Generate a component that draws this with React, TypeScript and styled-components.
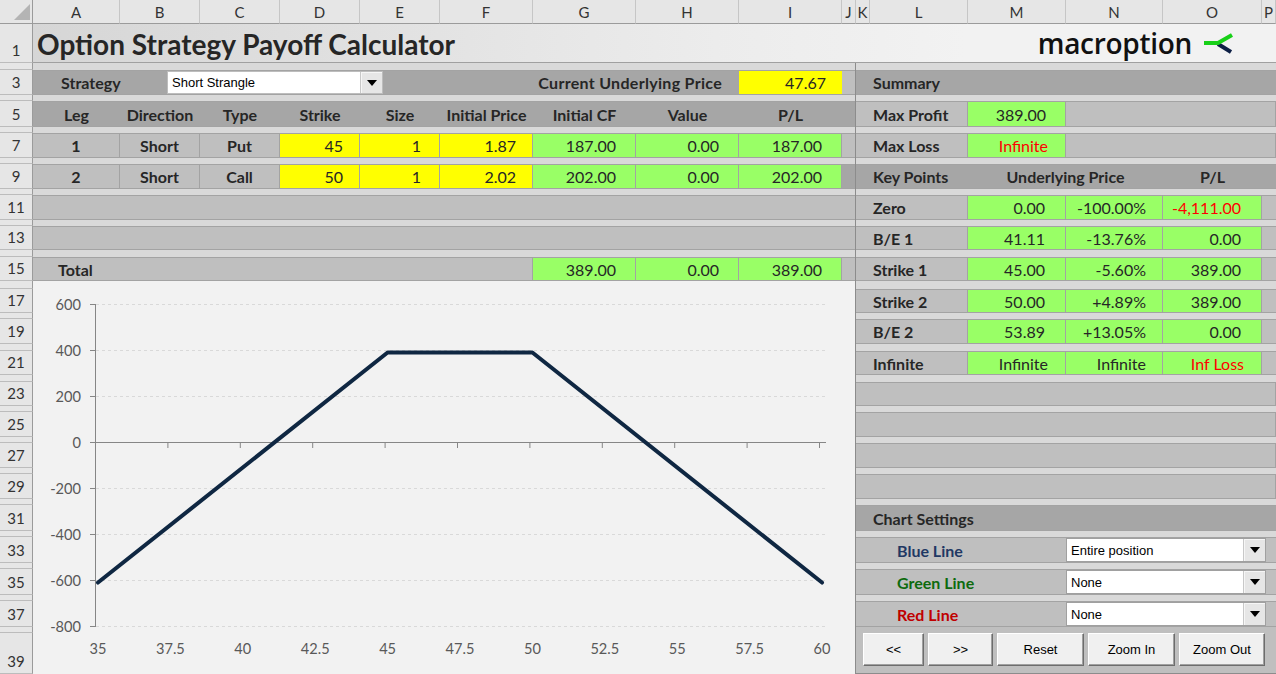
import React from 'react';
import styled, { createGlobalStyle, css } from 'styled-components';

const GlobalStyle = createGlobalStyle`
  html, body {
    margin: 0;
    padding: 0;
    background: #ffffff;
    overflow: hidden;
  }
  body {
    font-family: Lato, "Liberation Sans", sans-serif;
    color: #262626;
  }
  * {
    box-sizing: border-box;
  }
`;

const COLS = [33, 87, 80, 80, 80, 80, 93, 103, 103, 103, 14, 14, 98, 98, 97, 99, 14];
const LETTERS = 'ABCDEFGHIJKLMNOP'.split('');
const ROWS = [39, 7, 25, 6, 26, 6, 25, 6, 25, 6, 25, 6, 24, 7, 24, 8, 24, 6, 25, 7, 24, 7, 24, 6, 25, 6, 25, 6, 25, 6, 26, 6, 26, 6, 26, 6, 26, 6, 41];
const LINE = '#a3a3a3';

const colLine = (letter: string) => letter.charCodeAt(0) - 63;

// "A:C 7" -> grid placement over columns A..C of sheet row 7
const place = (at: string) => {
  const [cols, rows] = at.split(' ');
  const [c1, c2 = c1] = cols.split(':');
  const [r1, r2 = r1] = rows.split(':').map(Number);
  return css`
    grid-column: ${colLine(c1)} / ${colLine(c2) + 1};
    grid-row: ${r1 + 1} / ${r2 + 2};
  `;
};

type Tone = 'head' | 'gray' | 'yellow' | 'green';
const fills: Record<Tone, string> = {
  head: '#a6a6a6',
  gray: '#bfbfbf',
  yellow: '#ffff00',
  green: '#99ff66',
};
const justify = { left: 'flex-start', center: 'center', right: 'flex-end' };

const Sheet = styled.div`
  display: grid;
  grid-template-columns: ${COLS.map(w => `${w}px`).join(' ')};
  grid-template-rows: 24px ${ROWS.map(h => `${h}px`).join(' ')};
  width: 1276px;
  height: 674px;
  overflow: hidden;
  background: #d9d9d9;
`;

const Corner = styled.div`
  grid-column: 1;
  grid-row: 1;
  background: #e6e6e6;
  border-right: 1px solid #9b9b9b;
  border-bottom: 1px solid #9b9b9b;
  display: flex;
  align-items: flex-end;
  justify-content: flex-end;
  padding: 0 2px 3px 0;
`;

const ColHead = styled.div<{ $col: number }>`
  grid-column: ${p => p.$col};
  grid-row: 1;
  background: #e6e6e6;
  border-right: 1px solid #c6c6c6;
  border-bottom: 1px solid #9b9b9b;
  display: flex;
  align-items: center;
  justify-content: center;
  font-size: 15px;
  color: #333333;
  overflow: hidden;
`;

const RowHead = styled.div<{ $row: number }>`
  grid-column: 1;
  grid-row: ${p => p.$row + 1};
  background: #e6e6e6;
  border-right: 1px solid #9b9b9b;
  border-bottom: 1px solid #bcbcbc;
  display: flex;
  align-items: flex-end;
  justify-content: center;
  padding-bottom: 4px;
  font-size: 15px;
  line-height: 15px;
  color: #333333;
  overflow: hidden;
`;

const TitleBar = styled.header`
  ${place('A:P 1')}
  display: flex;
  align-items: center;
  justify-content: space-between;
  padding: 0 42px 0 4px;
  background: linear-gradient(to right, #d6d6d6 0%, #ececec 55%, #f2f2f2 75%);
  border-bottom: 1px solid #a0a0a0;
`;

const Heading = styled.h1`
  margin: 0;
  font-size: 28px;
  font-weight: 700;
  color: #262626;
  padding-top: 2px;
`;

const Logo = styled.div`
  display: flex;
  align-items: center;
  gap: 10px;
`;

const LogoText = styled.span`
  font-family: "Open Sans", "Noto Sans", sans-serif;
  font-weight: 600;
  font-size: 28px;
  letter-spacing: -0.3px;
  color: #111111;
`;

const Cell = styled.div<{
  $at: string;
  $tone: Tone;
  $align?: 'left' | 'center' | 'right';
  $inset?: number;
  $bold?: boolean;
  $alert?: boolean;
}>`
  ${p => place(p.$at)}
  display: flex;
  align-items: center;
  justify-content: ${p => justify[p.$align ?? 'left']};
  padding-left: ${p => ((p.$align ?? 'left') === 'left' ? p.$inset ?? 17 : 0)}px;
  padding-right: ${p => (p.$align === 'right' ? p.$inset ?? 19 : 0)}px;
  background: ${p => fills[p.$tone]};
  border-top: 1px solid ${LINE};
  border-bottom: 1px solid ${LINE};
  border-right: ${p => (p.$tone === 'head' ? 'none' : `1px solid ${LINE}`)};
  font-size: 16px;
  font-weight: ${p => (p.$bold ? 700 : 400)};
  color: ${p => (p.$alert ? '#ff0000' : '#262626')};
  white-space: nowrap;
  overflow: hidden;
`;

const ControlRow = styled.div`
  ${place('A:I 3')}
  display: flex;
  background: #a6a6a6;
  border-top: 1px solid ${LINE};
  border-bottom: 1px solid ${LINE};
  font-size: 16px;
  font-weight: 700;
`;

const ControlLabel = styled.span`
  width: 134px;
  display: flex;
  align-items: center;
  padding-left: 28px;
`;

const PriceLabel = styled.span`
  flex: 1;
  display: flex;
  align-items: center;
  justify-content: flex-end;
  padding-right: 17px;
  letter-spacing: 0.3px;
`;

const PriceValue = styled.span`
  width: 103px;
  display: flex;
  align-items: center;
  justify-content: flex-end;
  padding-right: 16px;
  background: #ffff00;
  font-weight: 400;
`;

const Combo = styled.div<{ $w: number; $framed?: boolean }>`
  width: ${p => p.$w}px;
  display: flex;
  background: #ffffff;
  border: 1px solid ${p => (p.$framed ? '#a0a0a0' : '#bdbdbd')};
  font-family: "Liberation Sans", Arial, sans-serif;
  font-size: 13px;
  font-weight: 400;
  color: #000000;
`;

const ComboValue = styled.span`
  flex: 1;
  display: flex;
  align-items: center;
  padding-left: 4px;
`;

const ComboButton = styled.span`
  width: 22px;
  display: flex;
  align-items: center;
  justify-content: center;
  background: #e6e6e6;
  border-left: 1px solid #c8c8c8;
  box-shadow: inset 1px 1px 0 #f6f6f6;
`;

const Caret = styled.span`
  width: 0;
  height: 0;
  border-left: 5px solid transparent;
  border-right: 5px solid transparent;
  border-top: 6px solid #000000;
`;

const Gutter = styled.div`
  ${place('J 2:39')}
  border-right: 1px solid #8c8c8c;
  pointer-events: none;
`;

const ChartArea = styled.div`
  ${place('A:J 16:39')}
  background: #f2f2f2;
  border-right: 1px solid #8c8c8c;
  overflow: hidden;
`;

const SettingRow = styled.div<{ $row: number }>`
  ${p => place(`K:P ${p.$row}`)}
  display: flex;
  background: #bfbfbf;
  border-top: 1px solid ${LINE};
  border-bottom: 1px solid ${LINE};
  padding-right: 10px;
`;

const SettingLabel = styled.span<{ $color: string }>`
  flex: 1;
  display: flex;
  align-items: center;
  padding-left: 41px;
  font-size: 16px;
  font-weight: 700;
  color: ${p => p.$color};
`;

const ButtonBar = styled.div`
  ${place('K:P 38:39')}
  display: flex;
  align-items: flex-start;
  gap: 4px;
  padding: 6px 0 0 7px;
  background: #bfbfbf;
  border-bottom: 1px solid #8c8c8c;
`;

const ActionButton = styled.button<{ $w: number }>`
  width: ${p => p.$w}px;
  height: 33px;
  padding: 0;
  background: #f0f0f0;
  border: 1px solid;
  border-color: #ffffff #6d6d6d #6d6d6d #ffffff;
  box-shadow: inset -1px -1px 0 #a0a0a0;
  font-family: "Liberation Sans", Arial, sans-serif;
  font-size: 13px;
  color: #000000;
`;

const legs = [
  { leg: '1', dir: 'Short', type: 'Put', strike: '45', size: '1', price: '1.87', cf: '187.00', value: '0.00', pl: '187.00' },
  { leg: '2', dir: 'Short', type: 'Call', strike: '50', size: '1', price: '2.02', cf: '202.00', value: '0.00', pl: '202.00' },
];

const keyPoints = [
  { label: 'Zero', price: '0.00', pct: '-100.00%', pl: '-4,111.00', bad: true },
  { label: 'B/E 1', price: '41.11', pct: '-13.76%', pl: '0.00' },
  { label: 'Strike 1', price: '45.00', pct: '-5.60%', pl: '389.00' },
  { label: 'Strike 2', price: '50.00', pct: '+4.89%', pl: '389.00' },
  { label: 'B/E 2', price: '53.89', pct: '+13.05%', pl: '0.00' },
  { label: 'Infinite', price: 'Infinite', pct: 'Infinite', pl: 'Inf Loss', bad: true, text: true },
];

const settings = [
  { label: 'Blue Line', color: '#1f3864', value: 'Entire position' },
  { label: 'Green Line', color: '#0e6b0e', value: 'None' },
  { label: 'Red Line', color: '#c00000', value: 'None' },
];

const buttons = [
  { label: '<<', w: 61 },
  { label: '>>', w: 65 },
  { label: 'Reset', w: 87 },
  { label: 'Zoom In', w: 87 },
  { label: 'Zoom Out', w: 86 },
];

// chart scale, in page pixels
const px = (s: number) => 98 + (s - 35) * 28.96;
const py = (v: number) => 442 - v * 0.23;
const payoff = (s: number) => 389 - 100 * Math.max(45 - s, 0) - 100 * Math.max(s - 50, 0);

const PayoffChart: React.FC = () => {
  const yTicks = [600, 400, 200, 0, -200, -400, -600, -800];
  const xTicks = Array.from({ length: 11 }, (_, k) => 35 + k * 2.5);
  const points = [35, 45, 50, 60].map(s => `${px(s)},${py(payoff(s))}`).join(' ');

  return (
    <ChartArea>
      <svg width={822} height={393} viewBox="33 281 822 393" fontFamily="Lato, sans-serif" fontSize={14.6}>
        {yTicks.filter(v => v !== 0).map(v => (
          <line key={v} x1={96} x2={826} y1={py(v) + 0.5} y2={py(v) + 0.5} stroke="#d9d9d9" strokeDasharray="3 3" />
        ))}
        <line x1={95.5} x2={95.5} y1={py(600)} y2={py(-800) + 1} stroke="#868686" />
        <line x1={95} x2={826} y1={442.5} y2={442.5} stroke="#868686" />
        {yTicks.map(v => (
          <g key={v}>
            <line x1={90} x2={95.5} y1={py(v) + 0.5} y2={py(v) + 0.5} stroke="#868686" />
            <text x={81} y={py(v) + 0.5} textAnchor="end" dominantBaseline="central" fill="#595959">
              {v}
            </text>
          </g>
        ))}
        {xTicks.map((s, k) => (
          <g key={s}>
            <line x1={95.5 + 72.4 * k} x2={95.5 + 72.4 * k} y1={442.5} y2={448} stroke="#868686" />
            <text x={px(s)} y={648} textAnchor="middle" dominantBaseline="central" fill="#595959">
              {s}
            </text>
          </g>
        ))}
        <polyline points={points} fill="none" stroke="#0f2742" strokeWidth={4} strokeLinejoin="round" strokeLinecap="round" />
      </svg>
    </ChartArea>
  );
};

const App: React.FC = () => {
  return (
    <>
      <GlobalStyle />
      <Sheet>
        <Corner>
          <svg width={16} height={16} viewBox="0 0 16 16">
            <polygon points="0,16 16,16 16,0" fill="#b4b4b4" />
          </svg>
        </Corner>
        {LETTERS.map((l, i) => (
          <ColHead key={l} $col={i + 2}>{l}</ColHead>
        ))}
        {ROWS.map((h, i) => (
          <RowHead key={i} $row={i + 1}>{h > 10 ? i + 1 : ''}</RowHead>
        ))}

        <TitleBar>
          <Heading>Option Strategy Payoff Calculator</Heading>
          <Logo>
            <LogoText>macroption</LogoText>
            <svg width={32} height={24} viewBox="0 0 32 24">
              <path d="M16 13 L29 21" stroke="#0d1f45" strokeWidth={4} fill="none" />
              <path d="M2 12 L16 12 L30 4" stroke="#18d018" strokeWidth={4} fill="none" strokeLinejoin="round" />
            </svg>
          </Logo>
        </TitleBar>

        {/* left panel */}
        <ControlRow>
          <ControlLabel>Strategy</ControlLabel>
          <Combo $w={216}>
            <ComboValue>Short Strangle</ComboValue>
            <ComboButton><Caret /></ComboButton>
          </Combo>
          <PriceLabel>Current Underlying Price</PriceLabel>
          <PriceValue>47.67</PriceValue>
        </ControlRow>
        <Cell $at="J 3" $tone="gray" />

        {['Leg', 'Direction', 'Type', 'Strike', 'Size', 'Initial Price', 'Initial CF', 'Value', 'P/L'].map((t, i) => (
          <Cell key={t} $at={`${LETTERS[i]} 5`} $tone="head" $align="center" $bold>{t}</Cell>
        ))}
        <Cell $at="J 5" $tone="head" />

        {legs.map((l, i) => {
          const r = 7 + i * 2;
          return (
            <React.Fragment key={l.leg}>
              <Cell $at={`A ${r}`} $tone="gray" $align="center" $bold>{l.leg}</Cell>
              <Cell $at={`B ${r}`} $tone="gray" $align="center" $bold>{l.dir}</Cell>
              <Cell $at={`C ${r}`} $tone="gray" $align="center" $bold>{l.type}</Cell>
              <Cell $at={`D ${r}`} $tone="yellow" $align="right" $inset={16}>{l.strike}</Cell>
              <Cell $at={`E ${r}`} $tone="yellow" $align="right" $inset={18}>{l.size}</Cell>
              <Cell $at={`F ${r}`} $tone="yellow" $align="right" $inset={16}>{l.price}</Cell>
              <Cell $at={`G ${r}`} $tone="green" $align="right">{l.cf}</Cell>
              <Cell $at={`H ${r}`} $tone="green" $align="right">{l.value}</Cell>
              <Cell $at={`I ${r}`} $tone="green" $align="right">{l.pl}</Cell>
              <Cell $at={`J ${r}`} $tone={i === 0 ? 'gray' : 'head'} />
            </React.Fragment>
          );
        })}

        <Cell $at="A:J 11" $tone="gray" />
        <Cell $at="A:J 13" $tone="gray" />

        <Cell $at="A:F 15" $tone="gray" $bold $inset={25}>Total</Cell>
        <Cell $at="G 15" $tone="green" $align="right">389.00</Cell>
        <Cell $at="H 15" $tone="green" $align="right">0.00</Cell>
        <Cell $at="I 15" $tone="green" $align="right">389.00</Cell>
        <Cell $at="J 15" $tone="gray" />

        <PayoffChart />

        {/* right panel */}
        <Cell $at="K:P 3" $tone="head" $bold>Summary</Cell>

        <Cell $at="K:L 5" $tone="gray" $bold>Max Profit</Cell>
        <Cell $at="M 5" $tone="green" $align="right">389.00</Cell>
        <Cell $at="N:P 5" $tone="gray" />

        <Cell $at="K:L 7" $tone="gray" $bold>Max Loss</Cell>
        <Cell $at="M 7" $tone="green" $align="right" $inset={17} $alert>Infinite</Cell>
        <Cell $at="N:P 7" $tone="gray" />

        <Cell $at="K:L 9" $tone="head" $bold>Key Points</Cell>
        <Cell $at="M:N 9" $tone="head" $align="center" $bold>Underlying Price</Cell>
        <Cell $at="O 9" $tone="head" $align="center" $bold>P/L</Cell>
        <Cell $at="P 9" $tone="head" />

        {keyPoints.map((k, i) => {
          const r = 11 + i * 2;
          return (
            <React.Fragment key={k.label}>
              <Cell $at={`K:L ${r}`} $tone="gray" $bold>{k.label}</Cell>
              <Cell $at={`M ${r}`} $tone="green" $align="right" $inset={k.text ? 17 : 20}>{k.price}</Cell>
              <Cell $at={`N ${r}`} $tone="green" $align="right" $inset={16}>{k.pct}</Cell>
              <Cell $at={`O ${r}`} $tone="green" $align="right" $inset={k.text ? 17 : 20} $alert={k.bad}>{k.pl}</Cell>
              <Cell $at={`P ${r}`} $tone="gray" />
            </React.Fragment>
          );
        })}

        {[23, 25, 27, 29].map(r => (
          <Cell key={r} $at={`K:P ${r}`} $tone="gray" />
        ))}

        <Cell $at="K:P 31" $tone="head" $bold>Chart Settings</Cell>

        {settings.map((s, i) => (
          <SettingRow key={s.label} $row={33 + i * 2}>
            <SettingLabel $color={s.color}>{s.label}</SettingLabel>
            <Combo $w={200} $framed>
              <ComboValue>{s.value}</ComboValue>
              <ComboButton><Caret /></ComboButton>
            </Combo>
          </SettingRow>
        ))}

        <ButtonBar>
          {buttons.map(b => (
            <ActionButton key={b.label} $w={b.w}>{b.label}</ActionButton>
          ))}
        </ButtonBar>

        <Gutter />
      </Sheet>
    </>
  );
};

export default App;
